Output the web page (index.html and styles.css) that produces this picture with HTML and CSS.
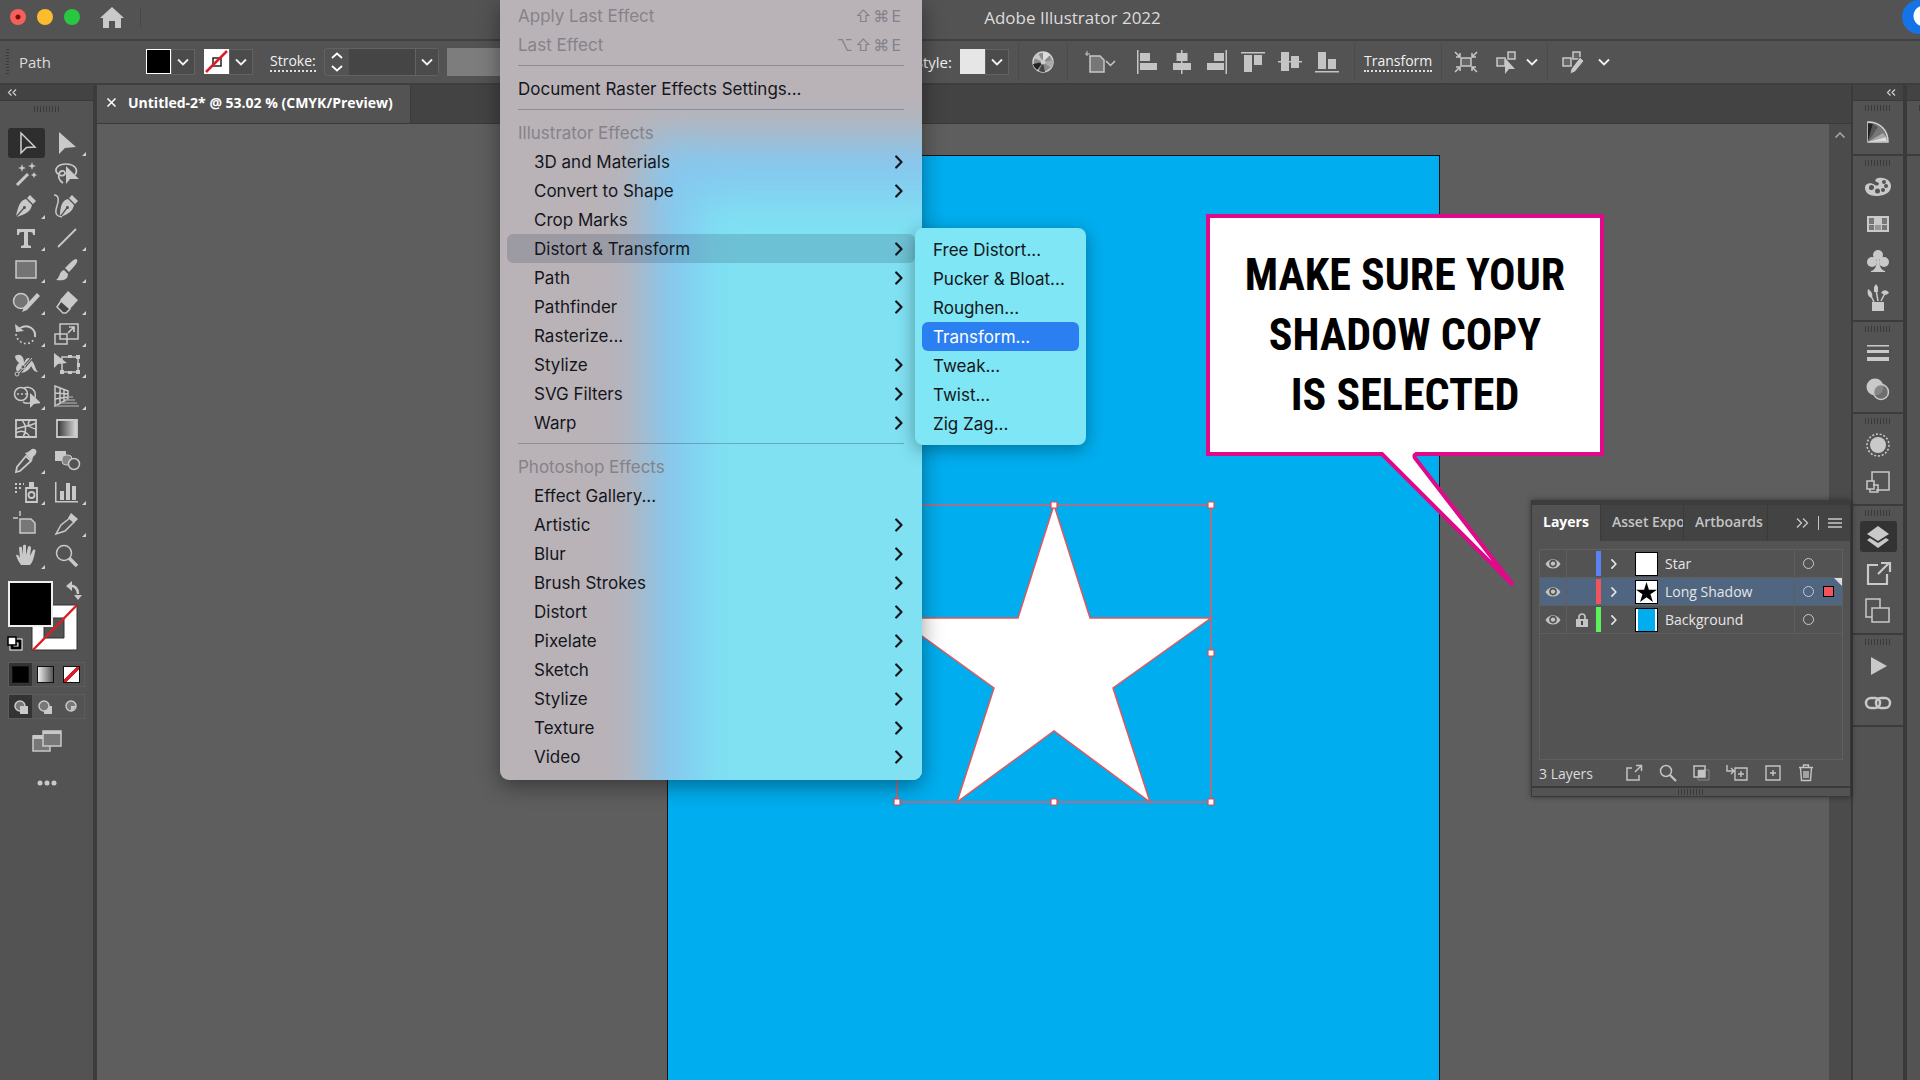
FILE: index.html
```html
<!DOCTYPE html>
<html lang="en">
<head>
  <meta charset="UTF-8">
  <title>Adobe Illustrator 2022</title>
  <meta name="viewport" content="width=device-width, initial-scale=1.0">
  <link rel="stylesheet" href="styles.css">
</head>
<body>
  <!-- shared shapes -->
  <svg class="defs" aria-hidden="true">
    <symbol id="down" viewBox="0 0 12 8"><path d="M1 1.5l5 5 5-5" fill="none" stroke="currentColor" stroke-width="1.8"/></symbol>
    <symbol id="right" viewBox="0 0 8 14"><path d="M1.2 1.5L6.500 7l-5.300 5.500" fill="none" stroke="currentColor" stroke-width="2.200" stroke-linecap="round" stroke-linejoin="round"/></symbol>
    <symbol id="double-left" viewBox="0 0 10 7"><path d="M4.500.5l-3 3 3 3M9 .5l-3 3 3 3" fill="none" stroke="currentColor" stroke-width="1.200"/></symbol>
    <symbol id="eye" viewBox="0 0 16 12"><path d="M.5 6C4-.5 12-.5 15.500 6 12 12 4 12 .5 6z" fill="currentColor"/><circle cx="8" cy="5.600" r="3.800" fill="#505050"/><circle cx="8" cy="5.600" r="2.200" fill="currentColor"/></symbol>
    <linearGradient id="fade"><stop offset="0" stop-color="#333"/><stop offset="1" stop-color="#ddd"/></linearGradient>
  </svg>

  <header class="titlebar">
    <div class="lights">
      <span class="light red"></span>
      <span class="light yellow"></span>
      <span class="light green"></span>
    </div>
    <button class="home" aria-label="Home">
      <svg width="24" height="21" viewBox="0 0 24 21"><path d="M12 0l12 11h-3v10h-6v-7H9v7H3V11H0z" fill="#c9c9c9"/></svg>
    </button>
    <h1 class="app-title">Adobe Illustrator 2022</h1>
    <span class="help-badge"></span>
  </header>

  <div class="control-bar">
    <span class="grip-v"></span>
    <span class="selection-type">Path</span>
    <button class="swatch-picker" aria-label="Fill">
      <span class="swatch fill"></span>
      <span class="drop"><svg width="12" height="8"><use href="#down"/></svg></span>
    </button>
    <button class="swatch-picker" aria-label="Stroke colour">
      <svg class="swatch" width="25" height="25"><rect width="25" height="25" fill="#fff"/><rect x="9" y="9" width="8" height="8" fill="none" stroke="#222" stroke-width="1.500"/><path d="M2 23L23 2" stroke="#d81f26" stroke-width="2.500"/></svg>
      <span class="drop"><svg width="12" height="8"><use href="#down"/></svg></span>
    </button>
    <label class="dotted" for="stroke-width">Stroke:</label>
    <div class="stroke-field">
      <button class="stepper" aria-label="Step stroke width">
        <svg width="12" height="20" viewBox="0 0 12 20"><path d="M1 6l5-4.500L11 6M1 14l5 4.500 5-4.500" fill="none" stroke="#fff" stroke-width="1.800"/></svg>
      </button>
      <input id="stroke-width" type="text">
      <button class="drop" aria-label="Stroke widths"><svg width="12" height="8"><use href="#down"/></svg></button>
    </div>
    <span class="profile"></span>
    <span class="style-label">Style:</span>
    <button class="swatch-picker" aria-label="Graphic style">
      <span class="swatch style"></span>
      <span class="drop"><svg width="12" height="8"><use href="#down"/></svg></span>
    </button>
    <div class="group wheel">
      <button class="icon" aria-label="Recolor artwork">
        <svg width="22" height="22" viewBox="0 0 22 22"><circle cx="11" cy="11" r="10" fill="#8b8b8b" stroke="#d0d0d0" stroke-width="1.500"/><path d="M11 11L11 1a10 10 0 0 1 7 3z" fill="#ddd"/><path d="M11 11l10-2a10 10 0 0 1-2 8z" fill="#aaa"/><path d="M11 11L1 13a10 10 0 0 0 4 6z" fill="#222"/><path d="M11 11l-4 9a10 10 0 0 0 6 1z" fill="#444"/><path d="M11 11L2 7a10 10 0 0 1 4-5z" fill="#c4c4c4"/><circle cx="11" cy="11" r="2.500" fill="#ccc"/></svg>
      </button>
    </div>
    <div class="group align">
      <button class="icon page-icon" aria-label="Align to artboard">
        <svg width="32" height="22" viewBox="0 0 32 22"><path d="M5 5h10l4 4v12H5z" fill="#777" stroke="#c8c8c8" stroke-width="1.500"/><path d="M2 0v5M0 3h5" stroke="#c8c8c8"/><path d="M21 10l4.500 4.500L30 10" fill="none" stroke="#c8c8c8" stroke-width="1.500"/></svg>
      </button>
      <button class="icon" aria-label="Align left"><svg width="22" height="24" viewBox="0 0 22 24"><path d="M1 0h1.500v24H1zM4 3h10v8H4zM4 13h17v7H4z" fill="#c4c4c4"/></svg></button>
      <button class="icon" aria-label="Align centre"><svg width="22" height="24" viewBox="0 0 22 24"><path d="M10 0h1.500v24H10zM5.500 3h11v8h-11zM2 13h18v7H2z" fill="#c4c4c4"/></svg></button>
      <button class="icon" aria-label="Align right"><svg width="22" height="24" viewBox="0 0 22 24"><path d="M19.500 0H21v24h-1.500zM8 3h10v8H8zM1 13h17v7H1z" fill="#c4c4c4"/></svg></button>
      <button class="icon" aria-label="Align top"><svg width="24" height="22" viewBox="0 0 24 22"><path d="M0 1h24v1.500H0zM3 4h8v17H3zM13 4h8v10h-8z" fill="#c4c4c4"/></svg></button>
      <button class="icon" aria-label="Align middle"><svg width="24" height="22" viewBox="0 0 24 22"><path d="M0 10h24v1.500H0zM3 1h8v19H3zM13 5h8v12h-8z" fill="#c4c4c4"/></svg></button>
      <button class="icon" aria-label="Align bottom"><svg width="24" height="22" viewBox="0 0 24 22"><path d="M0 20h24v1.500H0zM3 1h8v17H3zM13 8h8v10h-8z" fill="#c4c4c4"/></svg></button>
    </div>
    <div class="group"><button class="dotted">Transform</button></div>
    <div class="group isolate">
      <button class="icon" aria-label="Isolate"><svg width="24" height="22" viewBox="0 0 24 22"><path d="M7 7h10v8H7z" fill="#666" stroke="#c8c8c8" stroke-width="1.500"/><path d="M1 1l5 5M23 1l-5 5M1 21l5-5M23 21l-5-5M2 6h4V2M22 6h-4V2M2 16h4v4M22 16h-4v4" fill="none" stroke="#c8c8c8" stroke-width="1.500"/></svg></button>
      <button class="icon" aria-label="Select similar"><svg width="22" height="24" viewBox="0 0 22 24"><path d="M1 8h8v8H1zM12 2h7v7h-7z" fill="#666" stroke="#c8c8c8" stroke-width="1.500"/><path d="M9 8l10 11h-6l-4 5z" fill="#c8c8c8"/></svg></button>
      <svg width="12" height="8"><use href="#down"/></svg>
    </div>
    <div class="group edit">
      <button class="icon" aria-label="Edit similar"><svg width="22" height="24" viewBox="0 0 22 24"><path d="M1 8h8v8H1zM11 2h7v7h-7z" fill="#666" stroke="#c8c8c8" stroke-width="1.500"/><path d="M18 7l4 4-9 11-5 2 1-5z" fill="#c8c8c8" stroke="#535353"/></svg></button>
      <svg width="12" height="8"><use href="#down"/></svg>
    </div>
  </div>

  <div class="workspace">
    <aside class="toolbox">
      <div class="dock-head"><svg width="10" height="7"><use href="#double-left"/></svg></div>
      <span class="grip"></span>
      <div class="tools">
        <button class="tool active" aria-label="Selection"><svg viewBox="0 0 28 28"><path d="M9 4v20l5.500-5.500L23 18z" fill="none" stroke="#d0d0d0" stroke-width="1.500"/></svg></button>
        <button class="tool more" aria-label="Direct selection"><svg viewBox="0 0 28 28"><path d="M6 3v22l6-6 11-1z"/></svg></button>
        <button class="tool" aria-label="Magic wand"><svg viewBox="0 0 28 28"><path d="M5 24L16 13" stroke="#c9c9c9" stroke-width="3"/><path d="M10 3l1 3 3 1-3 1-1 3-1-3-3-1 3-1zM20 1l1 3 3 1-3 1-1 3-1-3-3-1 3-1zM22 11l1 2 2 1-2 1-1 2-1-2-2-1 2-1z"/></svg></button>
        <button class="tool" aria-label="Lasso"><svg viewBox="0 0 28 28"><path d="M22 14c4-6-1-11-9-11S1 8 4 12s8 3 8 0-5-3-6 1 1 7 4 9" fill="none" stroke="#c9c9c9" stroke-width="1.700"/><path d="M13 5v18l4-5 9 0z"/></svg></button>
        <button class="tool more" aria-label="Pen"><svg viewBox="0 0 28 28"><path d="M18 3l6 6-3 3-6-6zM14 7l6 6c-1 6-6 9-15 12l7-8a1.500 1.500 0 1 0-1-1l-7 8C6 15 8 8 14 7z"/></svg></button>
        <button class="tool" aria-label="Curvature"><svg viewBox="0 0 28 28"><path d="M19 3l6 6-3 3-6-6zM15 7l6 6c-1 6-6 9-13 12l6-8a1.500 1.500 0 1 0-1-1l-6 8C7 15 9 8 15 7z"/><path d="M1 3c5 0 5 5 3 11s-2 10 5 11" fill="none" stroke="#c9c9c9" stroke-width="1.500"/></svg></button>
        <button class="tool more" aria-label="Type"><svg viewBox="0 0 28 28"><path d="M5 5h18v6h-2c0-3-1-3-5-3v13l3 1v2H9v-2l3-1V8c-4 0-5 0-5 3H5z"/></svg></button>
        <button class="tool more" aria-label="Line"><svg viewBox="0 0 28 28"><path d="M5 23L23 5" stroke="#c9c9c9" stroke-width="1.800"/></svg></button>
        <button class="tool more" aria-label="Rectangle"><svg viewBox="0 0 28 28"><path d="M4 5h20v17H4z" fill="#747474" stroke="#c9c9c9" stroke-width="1.500"/></svg></button>
        <button class="tool more" aria-label="Paintbrush"><svg viewBox="0 0 28 28"><path d="M23 3c3 1 1 5-7 13l-4-4c6-6 9-9 11-9zM11 14l4 4c0 6-5 7-12 6 4-2 3-9 8-10z"/></svg></button>
        <button class="tool more" aria-label="Shaper"><svg viewBox="0 0 28 28"><circle cx="9" cy="13" r="7.500" fill="#747474" stroke="#c9c9c9" stroke-width="1.500"/><path d="M25 5l3 3-13 14-5 2 2-5z"/></svg></button>
        <button class="tool more" aria-label="Eraser"><svg viewBox="0 0 28 28"><path d="M15 3l10 9-8 9-10-9z"/><path d="M8 13l9 8-4 4h-3l-6-6z" fill="#444" stroke="#c9c9c9" stroke-width="1.500"/></svg></button>
        <button class="tool more" aria-label="Rotate"><svg viewBox="0 0 28 28"><path d="M8 8c9-5 16 2 15 9" fill="none" stroke="#c9c9c9" stroke-width="2"/><path d="M3 4l1 8 8-1z"/><path d="M4 14c1 10 14 13 18 5" fill="none" stroke="#c9c9c9" stroke-width="1.800" stroke-dasharray="1.800 2.500"/></svg></button>
        <button class="tool more" aria-label="Scale"><svg viewBox="0 0 28 28"><path d="M7 4h18v15H7zM2 14h12v10H2z" fill="none" stroke="#c9c9c9" stroke-width="1.500"/><path d="M15 13l6-6m-5 0h5v5" fill="none" stroke="#c9c9c9" stroke-width="1.700"/></svg></button>
        <button class="tool more" aria-label="Width"><svg viewBox="0 0 28 28"><path d="M3 5c5-3 9 0 9 7 2-5 5-7 8-2 3 3 3 8 6 11-4 0-5-3-7-6-2 5-8 8-12 6-4-1-4-5 0-9-2-2-4-4-4-7z"/><path d="M7 22L20 7" stroke="#535353" stroke-width="3"/><path d="M6 23L20 7" stroke="#c9c9c9"/><circle cx="5" cy="23" r="2" fill="#535353" stroke="#c9c9c9"/><circle cx="11" cy="16" r="2" fill="#535353" stroke="#c9c9c9"/></svg></button>
        <button class="tool more" aria-label="Free transform"><svg viewBox="0 0 28 28"><path d="M9 6h16v15H9z" fill="none" stroke="#c9c9c9" stroke-width="1.500"/><path d="M7 19h4v4H7zM23 19h4v4h-4zM23 4h4v4h-4zM15 4h4v3h-4zM15 20h4v3h-4zM24 12h3v4h-3zM1 2v15l4-4 9-1z"/></svg></button>
        <button class="tool more" aria-label="Shape builder"><svg viewBox="0 0 28 28"><circle cx="9" cy="11" r="6.500" fill="none" stroke="#c9c9c9" stroke-width="1.500"/><path d="M12 5a8 8 0 1 1-1 14" fill="none" stroke="#c9c9c9" stroke-width="1.500"/><path d="M5 11h12" stroke="#c9c9c9" stroke-width="1.500" stroke-dasharray="2"/><path d="M18 10v15l4-4 7-1z"/></svg></button>
        <button class="tool more" aria-label="Perspective grid"><svg viewBox="0 0 28 28"><path d="M2 3l13 5v8L2 23zM2 10l13 1M2 16l13-2M7 5v15M11 6v12" fill="none" stroke="#c9c9c9" stroke-width="1.500"/><path d="M15 14h5M12 17h10M8 20h16M3 23h23" stroke="#999" stroke-width="1.300"/></svg></button>
        <button class="tool" aria-label="Mesh"><svg viewBox="0 0 28 28"><path d="M4 5h20v17H4z" fill="none" stroke="#c9c9c9" stroke-width="1.800"/><path d="M10 5c5 6 5 11 1 17M18 5c-3 4-3 7 6 9M4 14c7-3 12-2 20-6M4 18c6-4 12 0 14 4" fill="none" stroke="#c9c9c9" stroke-width="1.500"/></svg></button>
        <button class="tool" aria-label="Gradient"><svg viewBox="0 0 28 28"><path d="M4 5h20v17H4z" fill="url(#fade)" stroke="#c9c9c9" stroke-width="1.800"/></svg></button>
        <button class="tool more" aria-label="Eyedropper"><svg viewBox="0 0 28 28"><path d="M14 9l5 5L8 24l-4 1 1-5z" fill="none" stroke="#c9c9c9" stroke-width="1.800"/><path d="M13 6l3-1 4-3c4-1 6 3 3 6l-2 2-1 4z"/></svg></button>
        <button class="tool" aria-label="Blend"><svg viewBox="0 0 28 28"><path d="M2 4h11v10H2z"/><rect x="9" y="8" width="10" height="10" rx="4" fill="#858585" stroke="#c9c9c9"/><circle cx="21" cy="17" r="5.500" fill="#535353" stroke="#c9c9c9" stroke-width="1.500"/></svg></button>
        <button class="tool more" aria-label="Symbol sprayer"><svg viewBox="0 0 28 28"><path d="M14 9h11v14H14z" fill="none" stroke="#c9c9c9" stroke-width="1.800"/><path d="M17 3h5v5h-5z"/><circle cx="19.500" cy="16" r="3" fill="none" stroke="#c9c9c9" stroke-width="1.800"/><path d="M3 5h9M3 9h7M3 13h3" stroke="#c9c9c9" stroke-width="2" stroke-dasharray="2"/></svg></button>
        <button class="tool more" aria-label="Column graph"><svg viewBox="0 0 28 28"><path d="M2 3h1.500v19H25v1.500H2zM7 12h4v9H7zM13 4h4v17h-4zM19 7h4v14h-4z"/></svg></button>
        <button class="tool" aria-label="Artboard"><svg viewBox="0 0 28 28"><path d="M8 9h11l4 4v10H8z" fill="#777" stroke="#c9c9c9" stroke-width="1.500"/><path d="M8 1v5M1 8h5" stroke="#c9c9c9" stroke-width="1.500"/></svg></button>
        <button class="tool more" aria-label="Slice"><svg viewBox="0 0 28 28"><path d="M17 8l4 4-9 9-9 3 5-9z" fill="none" stroke="#c9c9c9" stroke-width="1.500"/><path d="M18 3l7 6-4 4-6-5z"/></svg></button>
        <button class="tool more" aria-label="Hand"><svg viewBox="0 0 28 28"><path d="M9 23c-2-3-4-6-5-10 1-1 3 0 4 3L7 6c1-2 3-1 3 0l1 7V4c1-2 3-1 3 0v9l2-8c1-2 3-1 3 1l-1 8 3-6c2-1 3 0 2 2-1 5-2 10-5 13z"/></svg></button>
        <button class="tool" aria-label="Zoom"><svg viewBox="0 0 28 28"><circle cx="11" cy="11" r="7.500" fill="none" stroke="#c9c9c9" stroke-width="1.500"/><path d="M16 16l8 8" stroke="#c9c9c9" stroke-width="3.500"/></svg></button>
      </div>
      <svg class="fill-stroke" width="94" height="80" viewBox="0 0 94 80">
        <path fill-rule="evenodd" d="M32 28h45v45H32zM44 41v20h20V41z" fill="#fff" stroke="#333"/>
        <path d="M33 73L77 28" stroke="#d81f26" stroke-width="2.500"/>
        <rect x="8" y="4" width="45" height="46" fill="#222"/>
        <rect x="9" y="5" width="43" height="44" stroke="#eee" stroke-width="2"/>
        <path d="M69 9c6-1 9 3 9 8" fill="none" stroke="#c9c9c9" stroke-width="2.500"/>
        <path d="M66 9l6-5v10zM74 18h8l-4 5z" fill="#c9c9c9"/>
        <path d="M12 64h8v7h-8z" fill="none" stroke="#fff" stroke-width="5"/><path d="M12 64h8v7h-8z" fill="none" stroke="#000" stroke-width="3"/>
        <path d="M8 60h8v8H8z" fill="#fff" stroke="#000" stroke-width="1.500"/>
      </svg>
      <div class="modes paint">
        <button class="on" aria-label="Color"><i class="chip black"></i></button>
        <button aria-label="Gradient fill"><i class="chip grad"></i></button>
        <button aria-label="None"><i class="chip none"></i></button>
      </div>
      <div class="modes">
        <button class="on" aria-label="Draw normal"><svg width="14" height="14" viewBox="0 0 14 14"><circle cx="6" cy="6" r="5" fill="#777" stroke="#c9c9c9" stroke-width="1.500"/><path d="M6 6h8v8H6z" fill="#c9c9c9"/></svg></button>
        <button aria-label="Draw behind"><svg width="14" height="14" viewBox="0 0 14 14"><path d="M6 6h8v8H6z" fill="#c9c9c9"/><circle cx="6" cy="6" r="5" fill="#777" stroke="#c9c9c9" stroke-width="1.500"/></svg></button>
        <button aria-label="Draw inside"><svg width="14" height="14" viewBox="0 0 14 14"><circle cx="7" cy="6" r="5" fill="#777" stroke="#c9c9c9" stroke-width="1.500"/><path d="M7 6h5l-4 5H7z" fill="#c9c9c9"/></svg></button>
      </div>
      <button class="icon screen-mode" aria-label="Screen mode"><svg width="30" height="22" viewBox="0 0 30 22"><path d="M1 6h17v15H1z" fill="#777" stroke="#c9c9c9" stroke-width="1.500"/><path d="M1 5h17v4H1z" fill="#c9c9c9"/><path d="M11 1h18v15H11z" fill="#777" stroke="#c9c9c9" stroke-width="1.500"/><path d="M11 1h18v3H11z" fill="#c9c9c9"/></svg></button>
      <button class="icon" aria-label="Edit toolbar"><svg width="20" height="6" viewBox="0 0 20 6"><circle cx="3" cy="3" r="2.500"/><circle cx="10" cy="3" r="2.500"/><circle cx="17" cy="3" r="2.500"/></svg></button>
    </aside>

    <main class="document">
      <div class="tabs">
        <div class="tab">
          <button class="icon" aria-label="Close document"><svg width="9" height="9" viewBox="0 0 9 9"><path d="M.5.5l8 8M8.500.5l-8 8" stroke="#fff" stroke-width="1.500"/></svg></button>
          <span>Untitled-2* @ 53.02 % (CMYK/Preview)</span>
        </div>
      </div>
      <div class="stage">
        <div class="canvas">
          <div class="artboard">
            <svg class="star" width="322" height="306" viewBox="-4 -4 322 306">
              <path d="M157 0l36 113h121l-98 70 37 114-96-71-97 71 37-114L0 113h121z" fill="#fff" stroke="#e0585c" stroke-width="1.500"/>
              <path d="M0 0h314v297H0z" fill="none" stroke="#d8626c" stroke-width="1.500"/>
              <g fill="#fff" stroke="#e8484c" stroke-width="1.200">
                <path d="M-3-3h6v6h-6zM154-3h6v6h-6zM311-3h6v6h-6zM311 145h6v6h-6zM-3 145h6v6h-6zM-3 294h6v6h-6zM154 294h6v6h-6zM311 294h6v6h-6z"/>
              </g>
            </svg>
          </div>
          <div class="callout">
            <p>MAKE SURE YOUR<br>SHADOW COPY<br>IS SELECTED</p>
            <svg class="tail" width="140" height="138" viewBox="0 0 140 138"><path d="M6 0v3l128 126L38 5V0z" fill="#fff"/><path d="M1 2h4l131 131L38 6q-2-4 3-4" fill="none" stroke="#e0098a" stroke-width="4"/></svg>
          </div>
        </div>
        <div class="scrollbar"><svg width="10" height="6" viewBox="0 0 10 6"><path d="M.5 5.500L5 1l4.500 4.500" fill="none" stroke="#aaa" stroke-width="1.500"/></svg></div>

        <section class="layers-panel">
          <div class="panel-tabs">
            <button class="panel-tab on">Layers</button>
            <button class="panel-tab clip">Asset Export</button>
            <button class="panel-tab boards">Artboards</button>
            <button class="icon panel-more" aria-label="More panels"><svg width="13" height="10" viewBox="0 0 13 10"><path d="M1 .5L5.500 5 1 9.500M7 .5L11.500 5 7 9.500" fill="none" stroke="#c9c9c9" stroke-width="1.300"/></svg></button>
            <span class="bar"></span>
            <button class="icon" aria-label="Panel menu"><svg width="14" height="10" viewBox="0 0 14 10"><path d="M0 1h14M0 5h14M0 9h14" stroke="#c9c9c9" stroke-width="1.300"/></svg></button>
          </div>
          <ul class="layers">
            <li class="layer">
              <span class="cell"><svg width="16" height="12"><use href="#eye"/></svg></span>
              <span class="cell lock"></span>
              <i class="tag blue"></i>
              <svg class="expand" width="6" height="12"><use href="#right"/></svg>
              <i class="thumb"></i>
              <span class="name">Star</span>
              <span class="target"><i></i></span>
            </li>
            <li class="layer selected">
              <span class="cell"><svg width="16" height="12"><use href="#eye"/></svg></span>
              <span class="cell lock"></span>
              <i class="tag red"></i>
              <svg class="expand" width="6" height="12"><use href="#right"/></svg>
              <i class="thumb"><svg width="21" height="20" viewBox="0 0 314 297"><path d="M157 0l36 113h121l-98 70 37 114-96-71-97 71 37-114L0 113h121z" fill="#000"/></svg></i>
              <span class="name">Long Shadow</span>
              <span class="target"><i></i><b></b></span>
            </li>
            <li class="layer">
              <span class="cell"><svg width="16" height="12"><use href="#eye"/></svg></span>
              <span class="cell lock"><svg width="12" height="14" viewBox="0 0 12 14"><path d="M3 6V4a3 3 0 0 1 6 0v2" fill="none" stroke="#c4c4c4" stroke-width="1.700"/><path d="M0 6h12v8H0z" fill="#c4c4c4"/><path d="M5 8h2v4H5z" fill="#444"/></svg></span>
              <i class="tag green"></i>
              <svg class="expand" width="6" height="12"><use href="#right"/></svg>
              <i class="thumb sky"></i>
              <span class="name">Background</span>
              <span class="target"><i></i></span>
            </li>
          </ul>
          <div class="panel-foot">
            <span class="count">3 Layers</span>
            <button class="icon" aria-label="Collect for export"><svg width="18" height="18" viewBox="0 0 18 18"><path d="M7 4H2v12h12v-5M10 8l6-6M11 1.500h5.500V7" fill="none" stroke="#c4c4c4" stroke-width="1.500"/></svg></button>
            <button class="icon" aria-label="Locate object"><svg width="18" height="18" viewBox="0 0 18 18"><circle cx="7" cy="7" r="5.500" fill="none" stroke="#c4c4c4" stroke-width="1.500"/><path d="M11 11l6 6" stroke="#c4c4c4" stroke-width="2.200"/></svg></button>
            <button class="icon" aria-label="Clipping mask"><svg width="18" height="18" viewBox="0 0 18 18"><path d="M6 6h11v10H6z" fill="none" stroke="#888"/><path d="M2 2h11v11H2z" fill="none" stroke="#c4c4c4" stroke-width="1.500"/><path d="M6 6h7v7H6z" fill="#c4c4c4"/></svg></button>
            <button class="icon" aria-label="New sublayer"><svg width="22" height="18" viewBox="0 0 22 18"><path d="M9 4h12v12H9zM15 7v6M12 10h6M1 1v6h6M5 4l3 3-3 3" fill="none" stroke="#c4c4c4" stroke-width="1.400"/></svg></button>
            <button class="icon" aria-label="New layer"><svg width="18" height="18" viewBox="0 0 18 18"><path d="M2 2h14v14H2zM9 6v6M6 9h6" fill="none" stroke="#c4c4c4" stroke-width="1.400"/></svg></button>
            <button class="icon" aria-label="Delete"><svg width="16" height="18" viewBox="0 0 16 18"><path d="M2.500 4l1 12.500h9l1-12.500M1 3.500h14M5.500 3V1h5v2M6 7v7M8 7v7M10 7v7" fill="none" stroke="#c4c4c4" stroke-width="1.400"/></svg></button>
          </div>
          <div class="panel-resize"><span class="grip"></span></div>
        </section>
      </div>
    </main>

    <aside class="dock">
      <div class="dock-head"><svg width="10" height="7"><use href="#double-left"/></svg></div>
      <div class="dock-group">
        <button class="panel-btn" aria-label="Gradient"><svg viewBox="0 0 28 28"><path d="M4 4c12 0 20 8 20 20H4z" fill="#777" stroke="#d0d0d0" stroke-width="1.500"/><path d="M4 24V5l5 1z" fill="#222"/><path d="M4 24l5-18 5 3z" fill="#555"/><path d="M4 24l15-9 3 4z" fill="#aaa"/><path d="M4 24l18-5 1 4z" fill="#ddd"/></svg></button>
      </div>
      <div class="dock-group">
        <button class="panel-btn" aria-label="Color"><svg viewBox="0 0 28 28"><path fill-rule="evenodd" d="M12 6C16 3 27 5 27 13S18 23 12 23 1 20 1 15s6-6 10-3c3 2 6-2 2-3-2 0-2-2-1-3zM5 14a2.500 2.500 0 1 0 5 1 2.500 2.500 0 1 0-5-1zM11 18a2.300 2.300 0 1 0 5 0 2.300 2.300 0 1 0-5 0zM17 17a2 2 0 1 0 4 0 2 2 0 1 0-4 0zM20 13a2 2 0 1 0 4 0 2 2 0 1 0-4 0zM18 9a2 2 0 1 0 4 0 2 2 0 1 0-4 0z"/></svg></button>
        <button class="panel-btn" aria-label="Swatches"><svg viewBox="0 0 28 28"><path d="M3 6h22v16H3z"/><path d="M5 8h5v6H5zM18 8h5v6h-5zM5 15h5v5H5zM18 15h5v5h-5z" fill="#777"/><path d="M11 15h6v5h-6z" fill="#999"/></svg></button>
        <button class="panel-btn" aria-label="Symbols"><svg viewBox="0 0 28 28"><circle cx="14" cy="8" r="5"/><circle cx="8" cy="15" r="5"/><circle cx="20" cy="15" r="5"/><path d="M13 11h2c0 8 2 12 6 13v1H7v-1c4-1 6-5 6-13z"/></svg></button>
        <button class="panel-btn" aria-label="Brushes"><svg viewBox="0 0 28 28"><path d="M8 18h12v9H8z"/><path d="M10 18L6 10M14 17L12 6M17 17l4-8" fill="none" stroke="#c9c9c9" stroke-width="1.500"/><path d="M4 5c4 3 5 5 4 9-4-1-5-4-4-9zM12 0l2 3v5h-4V3zM17 9c3-4 6-3 8 0l-3 2z"/></svg></button>
      </div>
      <div class="dock-group">
        <button class="panel-btn" aria-label="Stroke"><svg viewBox="0 0 28 28"><path d="M3 6h22v1.500H3zM3 11h22v3H3zM3 18h22v4H3z"/></svg></button>
        <button class="panel-btn" aria-label="Transparency"><svg viewBox="0 0 28 28"><circle cx="11" cy="11" r="8.500"/><circle cx="17" cy="16" r="7.500" fill="#777" fill-opacity=".8" stroke="#c9c9c9" stroke-width="1.500"/></svg></button>
      </div>
      <div class="dock-group">
        <button class="panel-btn" aria-label="Appearance"><svg viewBox="0 0 28 28"><circle cx="14" cy="14" r="8"/><circle cx="14" cy="14" r="11" fill="none" stroke="#c9c9c9" stroke-width="1.500" stroke-dasharray="2 1.800"/></svg></button>
        <button class="panel-btn" aria-label="Graphic styles"><svg viewBox="0 0 28 28"><path d="M8 13V4h17v18H12M9 17h5v7H6v-3M3 13h7v8H3z" fill="none" stroke="#c9c9c9" stroke-width="1.500"/></svg></button>
      </div>
      <div class="dock-group">
        <button class="panel-btn on" aria-label="Layers"><svg viewBox="0 0 28 28"><path d="M14 3l11 8-11 7-11-7zM3 17l3-2 8 5 8-5 3 2-11 8z"/></svg></button>
        <button class="panel-btn" aria-label="Asset export"><svg viewBox="0 0 28 28"><path d="M14 5H4v19h19V14M14 14L25 3M17 3h9v9" fill="none" stroke="#c9c9c9" stroke-width="2.200"/></svg></button>
        <button class="panel-btn" aria-label="Artboards"><svg viewBox="0 0 28 28"><path d="M8 20H2V2h14v9M8 11h17v14H8z" fill="none" stroke="#c9c9c9" stroke-width="1.500"/></svg></button>
      </div>
      <div class="dock-group">
        <button class="panel-btn" aria-label="Actions"><svg viewBox="0 0 28 28"><path d="M7 5l16 9-16 9z"/></svg></button>
        <button class="panel-btn" aria-label="Links"><svg viewBox="0 0 28 28"><rect x="2" y="9" width="14" height="10" rx="5" fill="none" stroke="#c9c9c9" stroke-width="2.500"/><rect x="12" y="9" width="14" height="10" rx="5" fill="none" stroke="#c9c9c9" stroke-width="2.500"/></svg></button>
      </div>
    </aside>
    <aside class="dock second">
      <div class="dock-head"></div>
      <div class="dock-group"></div>
    </aside>
  </div>

  <nav class="effect-menu" aria-label="Effect">
    <div class="menu-glass"></div>
    <ul class="menu-list">
      <li><button class="item off"><span>Apply Last Effect</span><kbd>⇧⌘E</kbd></button></li>
      <li><button class="item off"><span>Last Effect</span><kbd>⌥⇧⌘E</kbd></button></li>
      <li class="rule"></li>
      <li><button class="item">Document Raster Effects Settings...</button></li>
      <li class="rule"></li>
      <li class="item off">Illustrator Effects</li>
      <li><button class="item sub"><span>3D and Materials</span><svg width="8" height="14"><use href="#right"/></svg></button></li>
      <li><button class="item sub"><span>Convert to Shape</span><svg width="8" height="14"><use href="#right"/></svg></button></li>
      <li><button class="item sub">Crop Marks</button></li>
      <li class="has-submenu">
        <button class="item sub open"><span>Distort &amp; Transform</span><svg width="8" height="14"><use href="#right"/></svg></button>
        <ul class="submenu">
          <li><button class="item">Free Distort...</button></li>
          <li><button class="item">Pucker &amp; Bloat...</button></li>
          <li><button class="item">Roughen...</button></li>
          <li><button class="item current">Transform...</button></li>
          <li><button class="item">Tweak...</button></li>
          <li><button class="item">Twist...</button></li>
          <li><button class="item">Zig Zag...</button></li>
        </ul>
      </li>
      <li><button class="item sub"><span>Path</span><svg width="8" height="14"><use href="#right"/></svg></button></li>
      <li><button class="item sub"><span>Pathfinder</span><svg width="8" height="14"><use href="#right"/></svg></button></li>
      <li><button class="item sub">Rasterize...</button></li>
      <li><button class="item sub"><span>Stylize</span><svg width="8" height="14"><use href="#right"/></svg></button></li>
      <li><button class="item sub"><span>SVG Filters</span><svg width="8" height="14"><use href="#right"/></svg></button></li>
      <li><button class="item sub"><span>Warp</span><svg width="8" height="14"><use href="#right"/></svg></button></li>
      <li class="rule"></li>
      <li class="item off">Photoshop Effects</li>
      <li><button class="item sub">Effect Gallery...</button></li>
      <li><button class="item sub"><span>Artistic</span><svg width="8" height="14"><use href="#right"/></svg></button></li>
      <li><button class="item sub"><span>Blur</span><svg width="8" height="14"><use href="#right"/></svg></button></li>
      <li><button class="item sub"><span>Brush Strokes</span><svg width="8" height="14"><use href="#right"/></svg></button></li>
      <li><button class="item sub"><span>Distort</span><svg width="8" height="14"><use href="#right"/></svg></button></li>
      <li><button class="item sub"><span>Pixelate</span><svg width="8" height="14"><use href="#right"/></svg></button></li>
      <li><button class="item sub"><span>Sketch</span><svg width="8" height="14"><use href="#right"/></svg></button></li>
      <li><button class="item sub"><span>Stylize</span><svg width="8" height="14"><use href="#right"/></svg></button></li>
      <li><button class="item sub"><span>Texture</span><svg width="8" height="14"><use href="#right"/></svg></button></li>
      <li><button class="item sub"><span>Video</span><svg width="8" height="14"><use href="#right"/></svg></button></li>
    </ul>
  </nav>
</body>
</html>
```
FILE: styles.css
```css
* {
  box-sizing: border-box;
}

body {
  margin: 0;
  height: 100vh;
  overflow: hidden;
  display: flex;
  flex-direction: column;
  background: #535353;
  color: #dcdcdc;
  font-family: "Open Sans", "Noto Sans", sans-serif;
  font-size: 15px;
}

button {
  margin: 0;
  padding: 0;
  border: none;
  background: none;
  color: inherit;
  font: inherit;
  cursor: pointer;
}

ul {
  margin: 0;
  padding: 0;
  list-style: none;
}

svg {
  display: block;
  flex: none;
}

.defs {
  position: absolute;
  width: 0;
  height: 0;
}

.icon {
  display: flex;
  align-items: center;
  justify-content: center;
  fill: #c9c9c9;
}

.grip {
  width: 26px;
  height: 6px;
  background: repeating-linear-gradient(to right, #3a3a3a 0 1px, transparent 1px 3px);
}

/* title bar */
.titlebar {
  display: flex;
  align-items: center;
  flex: none;
  height: 41px;
  padding: 0 0 5px 10px;
  border-bottom: 2px solid #404040;
}

.lights {
  display: flex;
  gap: 11px;
}

.light {
  width: 16px;
  height: 16px;
  border-radius: 50%;
}

.light.red {
  background: radial-gradient(circle, #7a0f0a 0 2px, #f5605a 3px);
}

.light.yellow {
  background: #fdbb2e;
}

.light.green {
  background: #28c840;
}

.home {
  margin-left: 20px;
  padding-right: 16px;
  border-right: 1px solid #484848;
}

.app-title {
  flex: 1;
  margin: 0;
  padding-left: 102px;
  text-align: center;
  font-size: 17px;
  font-weight: 400;
}

.help-badge {
  width: 18px;
  height: 34px;
  border-radius: 17px 0 0 17px;
  background: radial-gradient(circle at 22px 16px, #fff 0 10px, #1473e6 11px);
}

/* control bar */
.control-bar {
  display: flex;
  align-items: center;
  flex: none;
  height: 44px;
  padding-left: 6px;
  border-bottom: 2px solid #3e3e3e;
  color: #f2f2f2;
  white-space: nowrap;
}

.grip-v {
  width: 3px;
  height: 26px;
  background: repeating-linear-gradient(to bottom, #3a3a3a 0 1px, transparent 1px 3px);
}

.selection-type {
  width: 118px;
  margin: 0 9px 0 10px;
  color: #dcdcdc;
}

.swatch-picker {
  display: flex;
  margin-right: 9px;
}

.swatch {
  width: 25px;
  height: 25px;
}

.swatch.fill {
  background: #000;
  border: 1px solid #fff;
}

.swatch.style {
  background: #e6e6e6;
}

.drop {
  display: flex;
  align-items: center;
  justify-content: center;
  width: 24px;
  height: 26px;
  border: 1px solid #626262;
  background: #4b4b4b;
}

.dotted {
  border-bottom: 2px dotted #ddd;
  line-height: 18px;
  font-size: 14px;
  font-weight: 500;
}

.stroke-field {
  display: flex;
  height: 28px;
  margin: 0 8px;
  border: 1px solid #626262;
  border-radius: 3px;
}

.stroke-field .drop {
  width: 23px;
  border-width: 0 0 0 1px;
}

.stepper {
  display: flex;
  align-items: center;
  justify-content: center;
  width: 24px;
}

.stroke-field input {
  width: 66px;
  border: none;
  background: #454545;
  color: #fff;
}

.profile {
  width: 452px;
  height: 28px;
  background: #7d7d7d;
}

label.dotted {
  margin-left: 8px;
}

.style-label {
  margin: 0 8px 0 16px;
}

.group {
  display: flex;
  align-items: center;
  height: 38px;
  padding: 0 9px;
  border-left: 1px solid #4a4a4a;
}

.group.wheel {
  padding: 0 13px;
}

.group.align {
  gap: 13px;
  padding: 0 15px 0 17px;
}

.page-icon {
  margin-right: 6px;
}

.group.isolate {
  gap: 8px;
  padding: 0 9px 0 12px;
}

.group.isolate .icon:first-child {
  margin-right: 10px;
}

.group.edit {
  gap: 14px;
  padding-left: 14px;
}

/* tool box */
.workspace {
  display: flex;
  flex: 1;
  min-height: 0;
}

.toolbox {
  display: flex;
  flex-direction: column;
  align-items: center;
  flex: none;
  width: 97px;
  border-right: 4px solid #3c3c3c;
}

.dock-head {
  display: flex;
  align-items: center;
  align-self: stretch;
  flex: none;
  height: 16px;
  padding-left: 7px;
  background: #434343;
  border-bottom: 1px solid #3a3a3a;
  color: #d0d0d0;
}

.toolbox > .grip {
  margin: 5px 0 15px;
}

.tools {
  display: grid;
  grid-template-columns: 41px 41px;
  grid-auto-rows: 1fr;
  flex: none;
  height: 445px;
}

.tool {
  position: relative;
  display: flex;
  align-items: center;
  justify-content: center;
  margin: 1px 2px;
  border-radius: 3px;
  fill: #c9c9c9;
}

.tool svg {
  width: 28px;
  height: 28px;
}

.tool.active {
  background: #2e2e2e;
}

.tool.more::after {
  content: "";
  position: absolute;
  right: 0;
  bottom: 2px;
  border: 2px solid transparent;
  border-right-color: #d0d0d0;
  border-bottom-color: #d0d0d0;
}

.fill-stroke {
  margin-top: 5px;
}

.modes {
  display: grid;
  grid-template-columns: 23px 1fr 1fr;
  width: 77px;
  height: 25px;
  margin-top: 7px;
  border: 1px solid #5c5c5c;
}

.modes.paint {
  margin-top: 5px;
}

.modes button {
  display: flex;
  align-items: center;
  justify-content: center;
}

.modes button.on {
  background: #333;
}

.chip {
  width: 17px;
  height: 17px;
  border: 1px solid #111;
}

.chip.black {
  background: #000;
}

.chip.grad {
  background: linear-gradient(to right, #eee, #555);
}

.chip.none {
  background: linear-gradient(135deg, #fff 42%, #d81f26 43% 57%, #fff 58%);
}

.screen-mode {
  margin: 11px 0 28px;
}

/* document */
.document {
  display: flex;
  flex-direction: column;
  flex: 1;
  min-width: 0;
}

.tabs {
  display: flex;
  flex: none;
  height: 39px;
  background: #434343;
  border-bottom: 1px solid #3a3a3a;
}

.tab {
  display: flex;
  align-items: center;
  gap: 12px;
  padding: 0 17px 3px 10px;
  background: #535353;
  border-right: 1px solid #3a3a3a;
  color: #fff;
  font-size: 14px;
  font-weight: 700;
}

.stage {
  position: relative;
  display: flex;
  flex: 1;
  min-height: 0;
}

.canvas {
  position: relative;
  flex: 1;
  background: #5e5e5e;
  overflow: hidden;
}

.artboard {
  position: absolute;
  left: 570px;
  top: 31px;
  bottom: -10px;
  width: 773px;
  background: #00aeef;
  border: 1px solid #111;
}

.star {
  position: absolute;
  left: 225px;
  top: 345px;
}

.callout {
  position: absolute;
  left: 1109px;
  top: 90px;
  width: 398px;
  height: 242px;
  display: flex;
  align-items: center;
  justify-content: center;
  background: #fff;
  border: 4px solid #e0098a;
}

.callout p {
  margin: 0;
  color: #000;
  font-family: "Roboto Condensed", "Liberation Sans Narrow", "Liberation Sans", sans-serif;
  font-size: 44px;
  font-weight: 700;
  line-height: 60px;
  text-align: center;
}

.tail {
  position: absolute;
  left: 167px;
  top: 234px;
}

.scrollbar {
  display: flex;
  justify-content: center;
  width: 22px;
  padding-top: 8px;
  background: #4b4b4b;
}

/* layers panel */
.layers-panel {
  position: absolute;
  right: 0;
  top: 376px;
  width: 320px;
  background: #535353;
  border: 1px solid #3a3a3a;
  border-top: 5px solid #3c3c3c;
  box-shadow: 0 0 6px rgba(0, 0, 0, 0.4);
}

.panel-tabs {
  display: flex;
  align-items: center;
  height: 36px;
  padding-right: 8px;
  background: #434343;
  color: #c4c4c4;
  font-size: 14px;
}

.panel-tab {
  height: 36px;
  padding: 0 11px 4px;
  border-right: 1px solid #3a3a3a;
  font-weight: 600;
  overflow: hidden;
  white-space: nowrap;
}

.panel-tab.on {
  background: #535353;
  color: #fff;
  font-weight: 700;
}

.panel-tab.clip {
  width: 83px;
  padding-right: 0;
}

.panel-tab.boards {
  padding-right: 4px;
}

.panel-more {
  margin-left: auto;
}

.bar {
  width: 1px;
  height: 14px;
  margin: 0 9px;
  background: #c4c4c4;
}

.layers {
  height: 211px;
  margin: 8px 7px 0;
  border: 1px solid #606060;
}

.layer {
  display: flex;
  align-items: center;
  height: 28px;
  border-bottom: 1px solid #5e5e5e;
  font-size: 14px;
  color: #e6e6e6;
}

.layer.selected {
  background: #4f6580;
}

.cell {
  display: flex;
  align-items: center;
  justify-content: center;
  width: 27px;
  height: 27px;
  border-right: 1px solid #5e5e5e;
  color: #c4c4c4;
}

.cell.lock {
  width: 29px;
  border: none;
}

.tag {
  width: 5px;
  height: 25px;
}

.tag.blue {
  background: #5a82f5;
}

.tag.red {
  background: #f2545b;
}

.tag.green {
  background: #5cf25c;
}

.expand {
  margin: 0 18px 0 10px;
}

.thumb {
  width: 23px;
  height: 24px;
  border: 1px solid #000;
  background: #fff;
  display: flex;
  align-items: center;
}

.thumb.sky {
  background: linear-gradient(to right, #fff 2px, #00aeef 2px 19px, #fff 19px);
}

.name {
  flex: 1;
  padding-left: 7px;
}

.target {
  position: relative;
  display: flex;
  align-items: center;
  gap: 9px;
  width: 48px;
  height: 27px;
  padding-left: 8px;
  border-left: 1px solid #5e5e5e;
}

.target i {
  width: 11px;
  height: 11px;
  border: 1px solid #c9c9c9;
  border-radius: 50%;
}

.target b {
  width: 11px;
  height: 11px;
  border: 1px solid #000;
  background: #f2545b;
}

/* folded corner of the selected layer */
.selected .target::after {
  content: "";
  position: absolute;
  right: 0;
  top: 0;
  border: 4px solid transparent;
  border-top-color: #ddd;
  border-right-color: #ddd;
}

.panel-foot {
  display: flex;
  align-items: center;
  justify-content: space-between;
  height: 26px;
  padding: 0 36px 0 7px;
  font-size: 14px;
}

.count {
  width: 70px;
}

.panel-resize {
  display: flex;
  align-items: center;
  justify-content: center;
  height: 10px;
  border-top: 2px solid #3a3a3a;
}

/* docked panels */
.dock {
  flex: none;
  width: 54px;
  border-left: 2px solid #3a3a3a;
  border-right: 2px solid #3a3a3a;
}

.dock .dock-head {
  padding-left: 33px;
}

.dock.second {
  width: 15px;
  border-right: none;
}

.dock-group {
  display: flex;
  flex-direction: column;
  align-items: center;
  min-height: 55px;
  padding: 12px 0 4px;
  border-bottom: 2px solid #3c3c3c;
  background: repeating-linear-gradient(to right, #3a3a3a 0 1px, transparent 1px 3px) 12px 4px / 26px 6px no-repeat;
}

.panel-btn {
  display: flex;
  align-items: center;
  justify-content: center;
  width: 37px;
  height: 31px;
  margin: 3px 0;
  border-radius: 3px;
  fill: #c9c9c9;
}

.panel-btn svg {
  width: 28px;
  height: 28px;
}

.panel-btn.on {
  background: #333;
}

/* effect menu */
.effect-menu {
  position: absolute;
  left: 500px;
  top: 0;
  width: 422px;
  color: #15161c;
  font-family: Inter, "Liberation Sans", sans-serif;
  font-size: 17px;
}

.menu-glass {
  position: absolute;
  inset: 0;
  overflow: hidden;
  border-radius: 0 0 9px 9px;
  background: #b9b3b8;
  box-shadow: 0 6px 22px rgba(0, 0, 0, 0.4);
}

/* artboard colour showing through the glass */
.menu-glass::before,
.menu-glass::after {
  content: "";
  position: absolute;
  right: -90px;
  bottom: -90px;
}

.menu-glass::before {
  left: 146px;
  top: 138px;
  background: #85c8f0;
  filter: blur(20px);
}

.menu-glass::after {
  left: 196px;
  top: 196px;
  background: #7fe1f2;
  filter: blur(20px);
}

.menu-list {
  position: relative;
  padding: 1px 7px 9px;
}

.item {
  display: flex;
  align-items: center;
  justify-content: space-between;
  width: 100%;
  height: 29px;
  padding: 0 12px 0 11px;
  border-radius: 6px;
  white-space: nowrap;
}

.item.sub {
  padding-left: 27px;
}

.item.off {
  color: #85828a;
}

.item.open {
  background: rgba(30, 50, 80, 0.18);
}

.item kbd {
  font-family: Inter, "DejaVu Sans", sans-serif;
  font-size: 16px;
  letter-spacing: 2px;
}

.rule {
  height: 15px;
  margin: 0 11px;
  padding-top: 6px;
}

.rule::after {
  content: "";
  display: block;
  height: 1px;
  background: rgba(60, 70, 90, 0.35);
}

.has-submenu {
  position: relative;
}

.submenu {
  position: absolute;
  left: 100%;
  top: -6px;
  width: 171px;
  padding: 7px;
  border-radius: 8px;
  background: #7ee6f4;
  box-shadow: 0 4px 18px rgba(0, 0, 0, 0.35);
}

.item.current {
  background: #2b7ff0;
  color: #fff;
}
```
